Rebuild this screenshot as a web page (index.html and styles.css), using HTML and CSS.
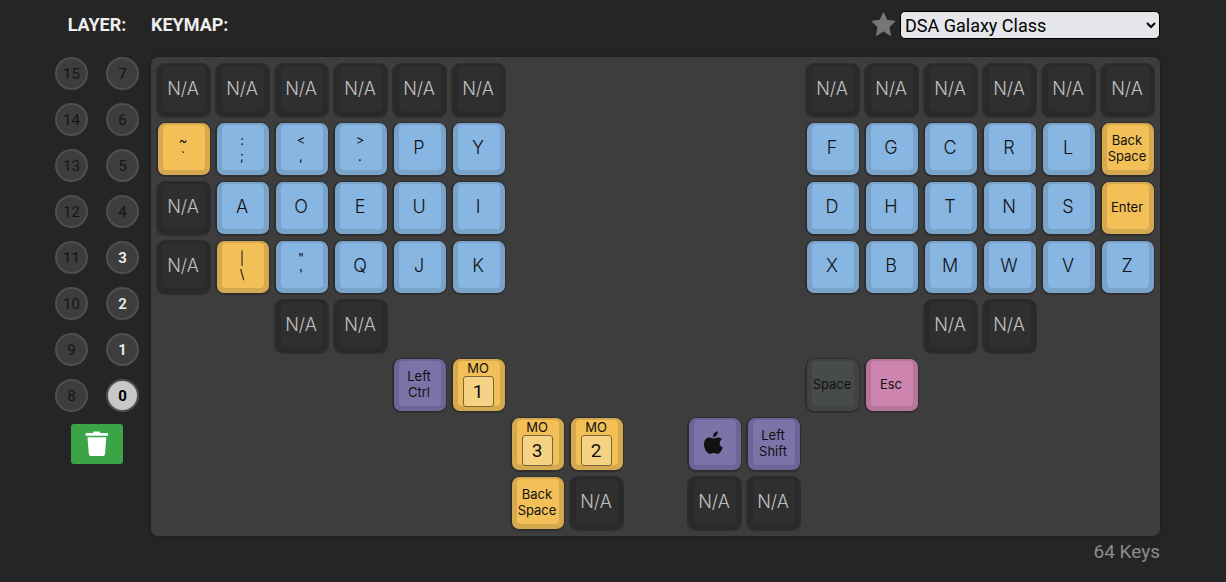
FILE: index.html
```html
<!DOCTYPE html>
<html lang="en">
<head>
<meta charset="utf-8">
<title>Keymap</title>
<link rel="stylesheet" href="styles.css">
</head>
<body>
<main class="app">
  <h2 class="heading heading-layer">Layer:</h2>
  <header class="toolbar">
    <h2 class="heading">Keymap:</h2>
    <div class="picker">
      <button class="star" type="button" aria-label="Favorite keymap colors">
        <svg width="26" height="26" viewBox="0 0 26 26"><path d="M13.500 .8l3.500 7.500 8 1-6 5.700 1.500 8.400-7-4.300-7 4.300L8 15 2 9.300l8-1z" fill="#777" stroke="#777" stroke-width="1" stroke-linejoin="round"/></svg>
      </button>
      <select class="colorway" aria-label="Colorway"><option>DSA Galaxy Class</option></select>
    </div>
  </header>
  <aside class="sidebar">
    <div class="layers">
      <button class="layer">15</button><button class="layer">7</button>
      <button class="layer">14</button><button class="layer">6</button>
      <button class="layer">13</button><button class="layer">5</button>
      <button class="layer">12</button><button class="layer">4</button>
      <button class="layer">11</button><button class="layer used">3</button>
      <button class="layer">10</button><button class="layer used">2</button>
      <button class="layer">9</button><button class="layer used">1</button>
      <button class="layer">8</button><button class="layer active">0</button>
    </div>
    <button class="trash" type="button" aria-label="Clear layer">
      <svg width="24" height="26" viewBox="0 0 24 26" fill="#fff"><path d="M1.500 2H8V1.200Q8 .5 8.800 .5H14.200Q15 .5 15 1.200V2H22Q23 2 23 3V4.800H.7V3Q.7 2 1.500 2zM2.500 6.200H21.300L20 23Q19.800 25 18 25H5.800Q4 25 3.800 23z"/></svg>
    </button>
  </aside>
  <section class="board">
    <button class="key na"><span class="face">N/A</span></button>
    <button class="key na"><span class="face">N/A</span></button>
    <button class="key na"><span class="face">N/A</span></button>
    <button class="key na"><span class="face">N/A</span></button>
    <button class="key na"><span class="face">N/A</span></button>
    <button class="key na"><span class="face">N/A</span></button>
    <button class="key na col-12"><span class="face">N/A</span></button>
    <button class="key na"><span class="face">N/A</span></button>
    <button class="key na"><span class="face">N/A</span></button>
    <button class="key na"><span class="face">N/A</span></button>
    <button class="key na"><span class="face">N/A</span></button>
    <button class="key na"><span class="face">N/A</span></button>

    <button class="key yellow word"><span class="face">~<br>`</span></button>
    <button class="key blue word"><span class="face">:<br>;</span></button>
    <button class="key blue word"><span class="face">&lt;<br>,</span></button>
    <button class="key blue word"><span class="face">&gt;<br>.</span></button>
    <button class="key blue"><span class="face">P</span></button>
    <button class="key blue"><span class="face">Y</span></button>
    <button class="key blue col-12"><span class="face">F</span></button>
    <button class="key blue"><span class="face">G</span></button>
    <button class="key blue"><span class="face">C</span></button>
    <button class="key blue"><span class="face">R</span></button>
    <button class="key blue"><span class="face">L</span></button>
    <button class="key yellow word"><span class="face">Back<br>Space</span></button>

    <button class="key na"><span class="face">N/A</span></button>
    <button class="key blue"><span class="face">A</span></button>
    <button class="key blue"><span class="face">O</span></button>
    <button class="key blue"><span class="face">E</span></button>
    <button class="key blue"><span class="face">U</span></button>
    <button class="key blue"><span class="face">I</span></button>
    <button class="key blue col-12"><span class="face">D</span></button>
    <button class="key blue"><span class="face">H</span></button>
    <button class="key blue"><span class="face">T</span></button>
    <button class="key blue"><span class="face">N</span></button>
    <button class="key blue"><span class="face">S</span></button>
    <button class="key yellow word"><span class="face">Enter</span></button>

    <button class="key na"><span class="face">N/A</span></button>
    <button class="key yellow word"><span class="face">|<br>\</span></button>
    <button class="key blue word"><span class="face">"<br>'</span></button>
    <button class="key blue"><span class="face">Q</span></button>
    <button class="key blue"><span class="face">J</span></button>
    <button class="key blue"><span class="face">K</span></button>
    <button class="key blue col-12"><span class="face">X</span></button>
    <button class="key blue"><span class="face">B</span></button>
    <button class="key blue"><span class="face">M</span></button>
    <button class="key blue"><span class="face">W</span></button>
    <button class="key blue"><span class="face">V</span></button>
    <button class="key blue"><span class="face">Z</span></button>

    <button class="key na col-3"><span class="face">N/A</span></button>
    <button class="key na"><span class="face">N/A</span></button>
    <button class="key na col-14"><span class="face">N/A</span></button>
    <button class="key na"><span class="face">N/A</span></button>

    <button class="key purple word col-5"><span class="face">Left<br>Ctrl</span></button>
    <button class="key yellow mo"><span class="face">MO<span class="target">1</span></span></button>
    <button class="key gray word col-12"><span class="face">Space</span></button>
    <button class="key pink word"><span class="face">Esc</span></button>

    <button class="key yellow mo col-7"><span class="face">MO<span class="target">3</span></span></button>
    <button class="key yellow mo"><span class="face">MO<span class="target">2</span></span></button>
    <button class="key purple col-10" aria-label="Command"><span class="face"><svg width="20" height="23" viewBox="0 0 20 23" fill="#111"><path d="M13.700 .3c.2 2-.6 3.500-1.600 4.500-1 1-2.200 1.400-3.200 1.300-.1-1.800.6-3.200 1.600-4.200.9-.9 2.200-1.500 3.200-1.600zM18.100 8.300c-1.700 1-2.400 2.300-2.400 3.900 0 2 1.200 3.500 3.100 4.300-.6 1.800-1.500 3.400-2.500 4.700-.8 1-1.700 1.500-2.700 1.500-1.300 0-2.100-.8-3.900-.8-1.900 0-2.700.8-4 .8-1 0-2-.6-2.900-1.700C.9 18.800 0 16 0 13.200c0-4 2.300-6.700 5.300-6.700 1.700 0 2.900 1 4.300 1 1.300 0 2.700-1.100 4.600-1.100 1.500 0 2.900.6 3.900 1.900z"/></svg></span></button>
    <button class="key purple word"><span class="face">Left<br>Shift</span></button>

    <button class="key yellow word col-7"><span class="face">Back<br>Space</span></button>
    <button class="key na"><span class="face">N/A</span></button>
    <button class="key na col-10"><span class="face">N/A</span></button>
    <button class="key na"><span class="face">N/A</span></button>
  </section>
  <p class="count">64 Keys</p>
</main>
</body>
</html>
```
FILE: styles.css
```css
* { box-sizing: border-box; }

body {
  margin: 0;
  background: #252525;
  color: #eee;
  font-family: Roboto, "Liberation Sans", sans-serif;
}

button {
  font: inherit;
  padding: 0;
  cursor: pointer;
}

.app {
  display: grid;
  grid-template-columns: 84px minmax(0, 1fr);
  column-gap: 12px;
  padding: 0 66px 0 55px;
}

.heading {
  margin: 0;
  font-size: 18px;
  font-weight: 700;
  line-height: 50px;
  text-transform: uppercase;
}

.heading-layer { text-align: center; }

.toolbar {
  display: flex;
  justify-content: space-between;
  align-items: center;
  height: 50px;
}

.picker {
  display: flex;
  align-items: center;
  gap: 4px;
}

.star {
  display: flex;
  border: 0;
  background: none;
}

.colorway {
  width: 260px;
  height: 28px;
  padding: 0;
  border: 1px solid #000;
  border-radius: 5px;
  background: #e5e5ea;
  color: #000;
  font-family: inherit;
  font-size: 18px;
}

.sidebar {
  display: flex;
  flex-direction: column;
  align-items: center;
  gap: 12px;
  padding-top: 7px;
}

.layers {
  display: grid;
  grid-template-columns: 33px 33px;
  gap: 13px 18px;
}

.layer {
  width: 33px;
  height: 33px;
  border: 2px solid #4f4f4f;
  border-radius: 50%;
  background: #3d3d3d;
  color: #151515;
  font-size: 15px;
}

.used {
  color: #eee;
  font-weight: 600;
}

.active {
  background: #c8c8c8;
  color: #000;
  font-weight: 700;
}

.trash {
  display: flex;
  align-items: center;
  justify-content: center;
  width: 52px;
  height: 40px;
  border: 0;
  border-radius: 3px;
  background: #3ba446;
}

.board {
  display: grid;
  grid-template-columns: repeat(17, 55px);
  justify-content: space-between;
  row-gap: 4px;
  margin-top: 7px;
  padding: 6px 5px 5px;
  border-radius: 7px;
  background: #3d3d3d;
  box-shadow: 0 0 3px #1c1c1c;
}

.col-3 { grid-column: 3; }
.col-5 { grid-column: 5; }
.col-7 { grid-column: 7; }
.col-10 { grid-column: 10; }
.col-12 { grid-column: 12; }
.col-14 { grid-column: 14; }

.key {
  display: flex;
  height: 55px;
  padding: 2px 5px 5px;
  border: solid #2e2e2e;
  border-width: 1px 1px 2px 2px;
  border-radius: 9px;
  color: #111;
  font-family: Inter, "Liberation Sans", sans-serif;
  font-size: 18px;
  font-weight: 300;
}

.face {
  display: flex;
  flex: 1;
  flex-direction: column;
  align-items: center;
  justify-content: center;
  height: 45px;
  padding-right: 2px;
  border-radius: 4px;
}

.word {
  font-size: 13px;
  font-weight: 400;
  line-height: 16px;
}

.word .face { display: grid; align-content: center; justify-content: center; }

.blue { background: #7aa3ca; }
.blue .face { background: #88b6e2; }
.yellow { background: #d4a94f; }
.yellow .face { background: #f2c057; }
.purple { background: #6c6597; }
.purple .face { background: #7c74a8; }
.pink { background: #b5769a; }
.pink .face { background: #cd84ae; }
.gray { background: #404342; }
.gray .face { background: #474b49; }

.na {
  background: #2a2a2a;
  color: #c0c0c0;
}

.na .face { background: #2f2f2f; }

.mo {
  font-size: 13px;
  font-weight: 400;
  line-height: 15px;
}

.mo .face { justify-content: flex-start; }

.target {
  width: 31px;
  height: 31px;
  flex: none;
  border: 1px solid #7b6435;
  border-radius: 3px;
  background: #f6d284;
  font-family: Roboto, "Liberation Sans", sans-serif;
  font-size: 19px;
  line-height: 29px;
}

.count {
  grid-column: 2;
  margin: 5px 0 0;
  color: #8c8c8c;
  font-size: 19px;
  line-height: 22px;
  text-align: right;
}
```
